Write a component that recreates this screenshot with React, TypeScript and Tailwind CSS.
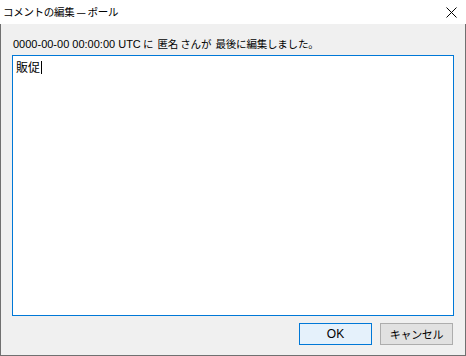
import React from "react";

const cjk = { fontFamily: '"Noto Sans CJK JP", "Noto Sans", sans-serif' };
const latin = { fontFamily: '"Liberation Sans", "Noto Sans CJK JP", sans-serif' };

const EditCommentDialog = () => {
  return (
    <div
      className="w-[466px] h-[356px] flex flex-col bg-[#f0f0f0] border border-t-0 border-[#707070] text-black text-[12px] leading-none"
      style={cjk}
    >
      {/* title bar */}
      <div className="h-[26px] bg-white flex items-center justify-between pl-[3px] pr-[8px] -mx-px">
        <span className="text-[10.5px] tracking-[-0.3px]">コメントの編集 — ポール</span>
        <svg width="11" height="11" viewBox="0 0 11 11" className="mr-[1px]">
          <path d="M0.5 0.5 L10.5 10.5 M10.5 0.5 L0.5 10.5" stroke="#000" strokeWidth="1" />
        </svg>
      </div>

      <div className="flex-1 flex flex-col px-[11px] pt-[12px] pb-[10px]">
        <div className="h-[16px] flex items-center whitespace-pre">
          <span className="text-[11px] pl-px" style={latin}>
            0000-00-00 00:00:00 UTC
          </span>
          <span className="text-[10.5px] tracking-[-0.2px]"> に  匿名 さんが  最後に編集しました。</span>
        </div>
        <div className="mt-[3px] h-[261px] bg-white border border-[#0078d7] px-[3px] pt-[5px] text-[12px] flex items-start">
          <span>販促</span>
          <span className="w-px h-[13px] bg-black ml-px" />
        </div>
        <div className="mt-[7px] flex justify-end gap-[8px] pr-[1px]">
          <button className="w-[73px] h-[22px] bg-[#e5f1fb] border border-[#0078d7] text-[12px]" style={latin}>
            OK
          </button>
          <button className="w-[73px] h-[22px] bg-[#e1e1e1] border border-[#adadad] text-[11px] tracking-[-0.3px]">
            キャンセル
          </button>
        </div>
      </div>
    </div>
  );
};

export default function App() {
  return <EditCommentDialog />;
}
